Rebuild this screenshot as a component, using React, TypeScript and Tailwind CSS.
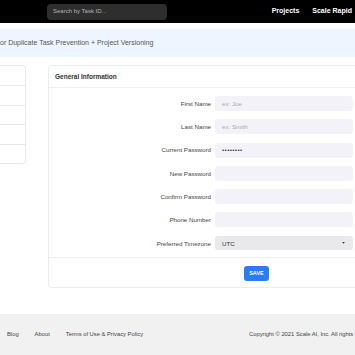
import React from "react";

const rows: { label: string; placeholder?: string; value?: string }[] = [
  { label: "First Name", placeholder: "ex: Joe" },
  { label: "Last Name", placeholder: "ex: Smith" },
  { label: "Current Password", value: "••••••••" },
  { label: "New Password" },
  { label: "Confirm Password" },
  { label: "Phone Number" },
];

export default function App() {
  return (
    <div
      className="w-[355px] h-[355px] overflow-hidden bg-white relative"
      style={{ fontFamily: '"Liberation Sans", Arial, sans-serif' }}
    >
      {/* Header */}
      <div className="h-[23px] bg-black flex items-center">
        <div className="ml-[47px] w-[120px] h-[16px] rounded-[4px] bg-[#2e2e2e] flex items-center pl-[6px] text-[6px] text-[#b5b5b5]">
          Search by Task ID...
        </div>
        <div className="ml-auto flex items-center text-white font-bold text-[7px] whitespace-nowrap">
          <span className="mr-[13px]">Projects</span>
          <span className="mr-[3px]">Scale Rapid</span>
        </div>
      </div>

      {/* Banner */}
      <div className="mt-[6px] h-[28px] bg-[#eef5fe] flex items-center text-[7px] text-[#555] whitespace-nowrap">
        or Duplicate Task Prevention + Project Versioning
      </div>

      {/* Content */}
      <div className="mt-[8px] flex items-start">
        <div className="w-[26px] shrink-0 h-[99px] border border-l-0 border-[#e9e9e9] rounded-r-[4px] flex flex-col">
          <div className="h-[20px] border-b border-[#e9e9e9]" />
          <div className="h-[20px] border-b border-[#e9e9e9]" />
          <div className="h-[19px] border-b border-[#e9e9e9]" />
          <div className="h-[20px] border-b border-[#e9e9e9]" />
          <div className="flex-1" />
        </div>
        <div className="ml-[22px] w-[310px] shrink-0 h-[223px] border border-[#ececec] rounded-[4px] flex flex-col">
          <div className="h-[22px] border-b border-[#f0f0f0] flex items-center pl-[6px] text-[6.5px] font-bold text-[#333]">
            General Information
          </div>
          <div className="flex flex-col pt-[8px] gap-[8.3px] pl-[6px]">
            {rows.map((r) => (
              <div key={r.label} className="flex items-center h-[15px]">
                <div className="w-[156px] text-right text-[6.2px] text-[#444]">{r.label}</div>
                <div className="ml-[4px] w-[138px] h-[15px] rounded-[3px] bg-[#f3f2f9] flex items-center pl-[7px] text-[6.2px]">
                  {r.placeholder ? (
                    <span className="text-[#aaa]">{r.placeholder}</span>
                  ) : r.value ? (
                    <span className="text-[#333] tracking-[0.4px]">{r.value}</span>
                  ) : null}
                </div>
              </div>
            ))}
            <div className="flex items-center h-[15px]">
              <div className="w-[156px] text-right text-[6.2px] text-[#444]">Preferred Timezone</div>
              <div className="ml-[4px] w-[138px] h-[14px] rounded-[3px] bg-[#e9e9ec] flex items-center pl-[7px] pr-[8px] text-[6.2px] text-[#333]">
                <span>UTC</span>
                <svg className="ml-auto" width="3" height="2" viewBox="0 0 4 3">
                  <path d="M0 0 L4 0 L2 2.5 Z" fill="#333" />
                </svg>
              </div>
            </div>
          </div>
          <div className="mt-[6px] border-t border-[#f0f0f0] flex-1 flex items-start pt-[8px]">
            <div className="ml-[195px] w-[25px] h-[15px] rounded-[3px] bg-[#2c7bf6] text-white font-bold text-[5.5px] flex items-center justify-center">
              SAVE
            </div>
          </div>
        </div>
      </div>

      {/* Footer */}
      <div className="absolute left-0 right-0 top-[314px] h-[41px] bg-[#f1f1f1] flex items-center text-[5.8px] text-[#444] whitespace-nowrap">
        <span className="ml-[7px]">Blog</span>
        <span className="ml-[16px]">About</span>
        <span className="ml-[16px]">Terms of Use &amp; Privacy Policy</span>
        <span className="ml-[106px]">Copyright © 2021 Scale AI, Inc. All rights reserved.</span>
      </div>
    </div>
  );
}
